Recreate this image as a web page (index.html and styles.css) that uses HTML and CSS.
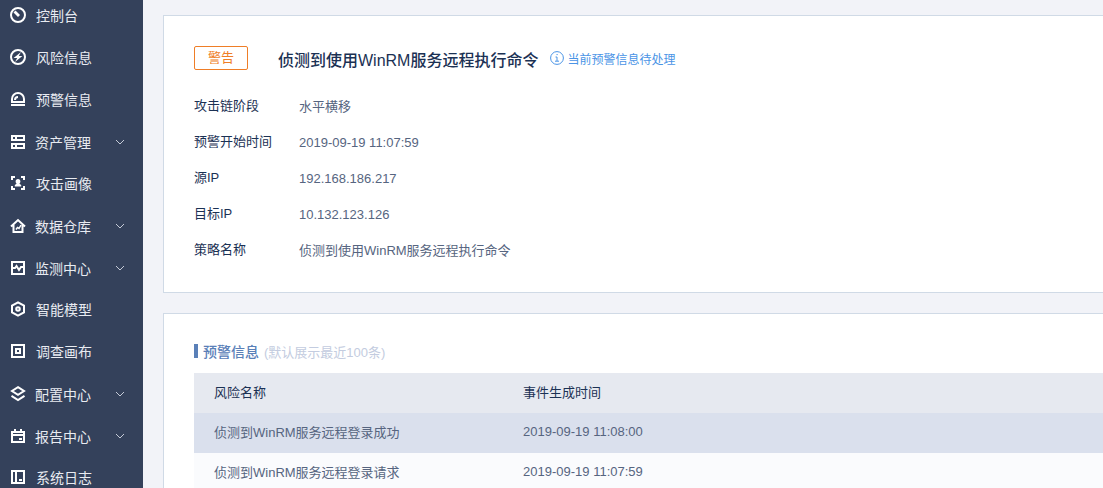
FILE: index.html
```html
<!DOCTYPE html>
<html lang="zh-CN">
<head>
  <meta charset="UTF-8" />
  <meta name="viewport" content="width=device-width, initial-scale=1.0" />
  <title>预警信息</title>
  <link rel="stylesheet" href="styles.css">
</head>
<body>
  <nav class="sidebar">
    <ul class="menu">
      <li><a class="menu-item" href="#">
        <svg class="icon" viewBox="0 0 16 16"><circle cx="8" cy="8" r="7"/><path d="M4.500 4.500L9 9" stroke-width="2.800"/></svg>
        <span>控制台</span></a></li>
      <li><a class="menu-item" href="#">
        <svg class="icon" viewBox="0 0 16 16"><circle cx="8" cy="8" r="7"/><path class="fill" d="M11 3L3.600 9h3.600L5 13l7.400-6H8.800z"/></svg>
        <span>风险信息</span></a></li>
      <li><a class="menu-item" href="#">
        <svg class="icon" viewBox="0 0 16 16"><path d="M2 11V8a6 6 0 0 1 12 0v3zM1 14h14M5 9a3 3 0 0 1 3-3"/></svg>
        <span>预警信息</span></a></li>
      <li><a class="menu-item has-children" href="#">
        <svg class="icon" viewBox="0 0 16 16"><path d="M2 2h12v4H2zM2 10h12v4H2zM6 2v4M6 10v4"/></svg>
        <span>资产管理</span>
        <svg class="arrow" viewBox="0 0 10 6"><path d="M1 1l4 4 4-4"/></svg></a></li>
      <li><a class="menu-item" href="#">
        <svg class="icon" viewBox="0 0 16 16"><path d="M5 2H2v3M11 2h3v3M5 14H2v-3M11 14h3v-3"/><path class="fill" d="M8 4c1.500 0 2.400 1 2.400 2.400 0 1-.4 1.800-1 2.400l1.800 1.200v1.500H4.800V10l1.800-1.200c-.6-.6-1-1.400-1-2.400C5.600 5 6.500 4 8 4z"/></svg>
        <span>攻击画像</span></a></li>
      <li><a class="menu-item has-children" href="#">
        <svg class="icon" viewBox="0 0 16 16"><path d="M1 8.500l7-6.500 7 6.500M3.500 7v7h9V7"/><path d="M6 11.500l1.500-2 1.500 1 2-3.500" stroke-width="1.500"/></svg>
        <span>数据仓库</span>
        <svg class="arrow" viewBox="0 0 10 6"><path d="M1 1l4 4 4-4"/></svg></a></li>
      <li><a class="menu-item has-children" href="#">
        <svg class="icon" viewBox="0 0 16 16"><path d="M2 2h12v12H2z"/><path d="M2 8h3l1.500-2 2.500 4 2-3h3"/></svg>
        <span>监测中心</span>
        <svg class="arrow" viewBox="0 0 10 6"><path d="M1 1l4 4 4-4"/></svg></a></li>
      <li><a class="menu-item" href="#">
        <svg class="icon" viewBox="0 0 16 16"><path d="M8 1.300l6 3.400v6.600l-6 3.400-6-3.400V4.700z"/><circle cx="8" cy="8" r="1.800"/></svg>
        <span>智能模型</span></a></li>
      <li><a class="menu-item" href="#">
        <svg class="icon" viewBox="0 0 16 16"><path d="M2 2h12v12H2zM6 6h4v4H6z"/></svg>
        <span>调查画布</span></a></li>
      <li><a class="menu-item has-children" href="#">
        <svg class="icon" viewBox="0 0 16 16"><path d="M8 1.200l6 3.800-6 3.800L2 5zM1.500 9.800L8 14l6.500-4.200"/></svg>
        <span>配置中心</span>
        <svg class="arrow" viewBox="0 0 10 6"><path d="M1 1l4 4 4-4"/></svg></a></li>
      <li><a class="menu-item has-children" href="#">
        <svg class="icon" viewBox="0 0 16 16"><path d="M2 4h12v10H2zM2 7h12M5 1v3M11 1v3"/><path class="fill" d="M9 10h3v2H9z"/></svg>
        <span>报告中心</span>
        <svg class="arrow" viewBox="0 0 10 6"><path d="M1 1l4 4 4-4"/></svg></a></li>
      <li><a class="menu-item" href="#">
        <svg class="icon" viewBox="0 0 16 16"><path d="M2 2h12v12H2zM6 2v12"/><path class="fill" d="M9 10h3v2H9z"/></svg>
        <span>系统日志</span></a></li>
    </ul>
  </nav>

  <main class="content">
    <section class="card">
      <header class="alert-header">
        <span class="level">警告</span>
        <h1>侦测到使用WinRM服务远程执行命令</h1>
        <span class="status">
          <svg class="info" viewBox="0 0 14 14"><circle cx="7" cy="7" r="6.400"/><path d="M5.500 6H7v4M5 10.200h4M6.500 3.600h1.200"/></svg>
          当前预警信息待处理
        </span>
      </header>
      <dl class="details">
        <dt>攻击链阶段</dt>
        <dd>水平横移</dd>
        <dt>预警开始时间</dt>
        <dd>2019-09-19 11:07:59</dd>
        <dt>源IP</dt>
        <dd>192.168.186.217</dd>
        <dt>目标IP</dt>
        <dd>10.132.123.126</dd>
        <dt>策略名称</dt>
        <dd>侦测到使用WinRM服务远程执行命令</dd>
      </dl>
    </section>

    <section class="card">
      <h2 class="section-title">预警信息 <small>(默认展示最近100条)</small></h2>
      <table class="events">
        <thead>
          <tr><th>风险名称</th><th>事件生成时间</th></tr>
        </thead>
        <tbody>
          <tr class="active"><td>侦测到WinRM服务远程登录成功</td><td>2019-09-19 11:08:00</td></tr>
          <tr><td>侦测到WinRM服务远程登录请求</td><td>2019-09-19 11:07:59</td></tr>
        </tbody>
      </table>
    </section>
  </main>
</body>
</html>
```

FILE: styles.css
```css
* {
  box-sizing: border-box;
}
body {
  margin: 0;
  display: flex;
  height: 100vh;
  overflow: hidden;
  background: #f2f3f8;
  color: #1b3154;
  font-family: "Liberation Sans", "Noto Sans CJK SC", sans-serif;
  font-size: 13px;
}
.sidebar {
  flex: none;
  width: 143px;
  background: #34415b;
}
.menu {
  list-style: none;
  margin: -6px 0 0;
  padding: 0;
}
.menu-item {
  display: flex;
  align-items: center;
  gap: 10px;
  height: 42px;
  padding: 0 18px 0 10px;
  color: #e8ebf1;
  font-size: 14px;
  text-decoration: none;
}
.menu-item.has-children {
  gap: 9px;
  padding-top: 2px;
}
.icon {
  width: 16px;
  height: 16px;
  fill: none;
  stroke: #fff;
  stroke-width: 2;
}
.icon .fill {
  fill: #fff;
  stroke: none;
}
.arrow {
  width: 10px;
  height: 6px;
  margin-left: auto;
  fill: none;
  stroke: #c5cbd8;
}
.content {
  flex: 1;
  min-width: 0;
  padding: 15px 0 0 20px;
}
.card {
  margin-bottom: 20px;
  padding: 30px 0 24px 30px;
  background: #fff;
  border: 1px solid #d0dae6;
  border-right: 0;
}
.alert-header {
  display: flex;
  align-items: center;
  height: 26px;
}
.level {
  align-self: flex-start;
  width: 54px;
  margin-right: 30px;
  border: 1px solid #ef7e27;
  border-radius: 2px;
  color: #ef7e27;
  line-height: 22px;
  text-align: center;
}
.alert-header h1 {
  margin: 0 12px 0 0;
  font-size: 16px;
  font-weight: 500;
}
.status {
  display: flex;
  align-items: center;
  gap: 3px;
  padding-bottom: 2px;
  color: #4a94e6;
  font-size: 12px;
}
.info {
  width: 14px;
  height: 14px;
  fill: none;
  stroke: #4a94e6;
}
.details {
  display: grid;
  grid-template-columns: 105px 1fr;
  grid-auto-rows: 36px;
  margin: 16px 0 0;
  line-height: 36px;
}
.details dd {
  margin: 0;
  color: #566580;
  line-height: 38px;
}
.section-title {
  display: flex;
  align-items: center;
  gap: 5px;
  height: 14px;
  margin: 0 0 15px;
  padding-left: 5px;
  border-left: 4px solid #5a80b8;
  color: #5a80b8;
  font-size: 14px;
  font-weight: 500;
}
.section-title small {
  color: #c3cce0;
  font-size: 13px;
  font-weight: 400;
}
.events {
  width: 100%;
  border-collapse: collapse;
  table-layout: fixed;
}
.events th,
.events td {
  height: 40px;
  padding: 0 20px 3px;
  text-align: left;
}
.events th {
  background: #e6e9f0;
  font-weight: 400;
}
.events th:first-child {
  width: 34%;
}
.events td {
  background: #fafbfd;
  color: #566580;
}
.events .active td {
  background: #dae0ed;
}
```
